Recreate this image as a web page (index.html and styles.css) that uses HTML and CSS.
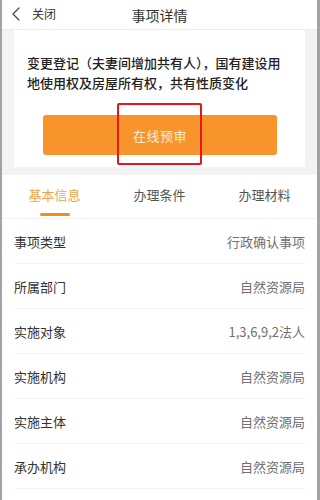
FILE: index.html
```html
<!DOCTYPE html>
<html lang="zh">
<head>
<meta charset="utf-8">
<title>事项详情</title>
<link rel="stylesheet" href="styles.css">
</head>
<body>
<div class="phone">
  <header class="topbar">
    <div class="back">
      <svg class="chev" width="10" height="14" viewBox="0 0 10 14"><polyline points="8,1 2,7 8,13" fill="none" stroke="#444" stroke-width="1.2" stroke-linecap="round" stroke-linejoin="round"/></svg>
      <span class="close">关闭</span>
    </div>
    <h1 class="title">事项详情</h1>
  </header>
  <section class="band">
    <div class="card">
      <p class="desc">变更登记（夫妻间增加共有人），国有建设用地使用权及房屋所有权，共有性质变化</p>
      <div class="btn-wrap">
        <button class="btn">在线预审</button>
        <span class="mark"></span>
      </div>
    </div>
  </section>
  <nav class="tabs">
    <div class="tab active">基本信息</div>
    <div class="tab">办理条件</div>
    <div class="tab">办理材料</div>
  </nav>
  <ul class="rows">
    <li class="row"><span class="label">事项类型</span><span class="value">行政确认事项</span></li>
    <li class="row"><span class="label">所属部门</span><span class="value">自然资源局</span></li>
    <li class="row"><span class="label">实施对象</span><span class="value">1,3,6,9,2法人</span></li>
    <li class="row"><span class="label">实施机构</span><span class="value">自然资源局</span></li>
    <li class="row"><span class="label">实施主体</span><span class="value">自然资源局</span></li>
    <li class="row"><span class="label">承办机构</span><span class="value">自然资源局</span></li>
  </ul>
</div>
</body>
</html>
```
FILE: styles.css
```css
* { box-sizing: border-box; }
html, body { margin: 0; padding: 0; background: #fff; }
body {
  font-family: "Noto Sans CJK SC", "Noto Sans", sans-serif;
  color: #333;
}
.phone {
  width: 320px;
  height: 500px;
  overflow: hidden;
  border-left: 2px solid #a3a3a3;
  border-right: 3px solid #a3a3a3;
  background: #fff;
}
.topbar {
  height: 30px;
  position: relative;
  display: flex;
  align-items: center;
  justify-content: center;
  border-bottom: 1px solid #ececec;
}
.back {
  position: absolute;
  left: 9px;
  top: 7px;
  display: flex;
  align-items: center;
  gap: 11px;
}
.chev { display: block; }
.close { font-size: 12px; color: #333; line-height: 14px; }
.title {
  margin: 0;
  font-size: 14px;
  font-weight: 400;
  color: #333;
  line-height: 28px;
}
.band {
  background: #f3f3f3;
  padding: 0 12px 8px;
}
.card {
  background: #fff;
  padding: 23px 13px 12px;
}
.desc {
  margin: 0;
  font-size: 13px;
  line-height: 20px;
  font-weight: 500;
  color: #222;
}
.btn-wrap {
  position: relative;
  margin-top: 22px;
  padding: 0 15px 0 16px;
}
.btn {
  display: block;
  width: 100%;
  height: 40px;
  border: 0;
  border-radius: 3px;
  background: #f7952c;
  color: #fdebd3;
  font-family: inherit;
  font-size: 13px;
  letter-spacing: 0.5px;
}
.mark {
  position: absolute;
  left: 90px;
  top: -12px;
  width: 85px;
  height: 62px;
  border: 2px solid #e8151b;
  border-radius: 2px;
}
.tabs {
  display: grid;
  grid-template-columns: repeat(3, 1fr);
  height: 44px;
  border-bottom: 1px solid #f2f2f2;
}
.tab {
  display: flex;
  justify-content: center;
  padding-top: 11px;
  font-size: 13px;
  line-height: 18px;
  color: #555;
  position: relative;
}
.tab.active { color: #efa548; }
.tab.active::after {
  content: "";
  position: absolute;
  left: 50%;
  top: 38px;
  width: 30px;
  height: 3px;
  margin-left: -15px;
  border-radius: 2px;
  background: #f08c22;
}
.rows {
  list-style: none;
  margin: 0;
  padding: 0 12px;
}
.row {
  height: 45px;
  display: flex;
  justify-content: space-between;
  align-items: center;
  border-bottom: 1px solid #f3f3f3;
  font-size: 13px;
}
.label { color: #333; }
.value { color: #707070; }
```
